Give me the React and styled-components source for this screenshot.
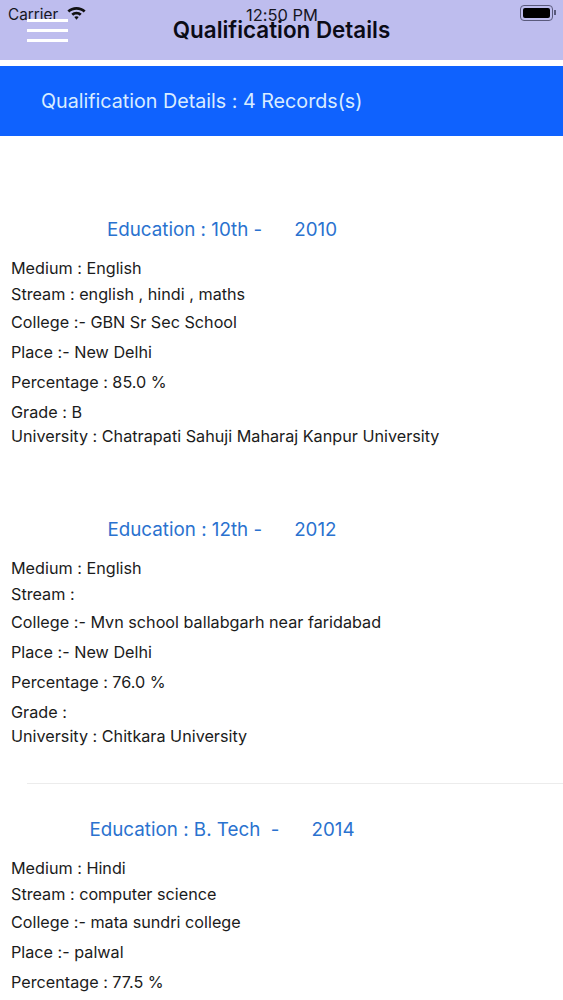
import React from "react";
import styled, { createGlobalStyle } from "styled-components";

const records = [
  {
    id: 1,
    education: "10th -",
    year: "2010",
    rows: [
      ["Medium : English", 0],
      ["Stream : english , hindi , maths", 6],
      ["College :- GBN Sr Sec School", 8],
      ["Place :- New Delhi", 10],
      ["Percentage : 85.0 %", 10],
      ["Grade : B", 10],
      ["University : Chatrapati Sahuji Maharaj Kanpur University", 4]
    ]
  },
  {
    id: 2,
    education: "12th -",
    year: "2012",
    line: true,
    rows: [
      ["Medium : English", 0],
      ["Stream :", 6],
      ["College :- Mvn school ballabgarh near faridabad", 8],
      ["Place :- New Delhi", 10],
      ["Percentage : 76.0 %", 10],
      ["Grade :", 10],
      ["University : Chitkara University", 4]
    ]
  },
  {
    id: 3,
    education: "B. Tech  -",
    year: "2014",
    rows: [
      ["Medium : Hindi", 0],
      ["Stream : computer science", 6],
      ["College :- mata sundri college", 8],
      ["Place :- palwal", 10],
      ["Percentage : 77.5 %", 10]
    ]
  }
];

const App = () => {
  return (
    <Page>
      <GlobalStyle />
      <Nav>
        <StatusBar>
          <Carrier>
            Carrier
            <svg width="19" height="14" viewBox="0 0 19 14">
              <path
                d="M9.5 1C6 1 2.800 2.300.4 4.600l1.900 2C4.200 4.800 6.700 3.800 9.500 3.800s5.300 1 7.200 2.800l1.900-2C16.200 2.300 13 1 9.500 1z"
                fill="#111"
              />
              <path
                d="M9.500 5.700c-2 0-3.800.8-5.200 2l1.900 2.100c.9-.8 2-1.300 3.300-1.300s2.400.5 3.300 1.300l1.900-2.100c-1.400-1.200-3.200-2-5.200-2z"
                fill="#111"
              />
              <path d="M9.500 10.200c-.9 0-1.600.3-2.200.8l2.200 2.800 2.200-2.800c-.6-.5-1.300-.8-2.200-.8z" fill="#111" />
            </svg>
          </Carrier>
          <Time>12:50 PM</Time>
          <Battery>
            <BatteryLevel />
          </Battery>
        </StatusBar>
        <Menu>
          <MenuBar />
          <MenuBar />
          <MenuBar />
        </Menu>
        <NavTitle>Qualification Details</NavTitle>
      </Nav>
      <Banner>Qualification Details : 4 Records(s)</Banner>
      <List>
        {records.map((item) => (
          <Record key={item.id}>
            <Heading>
              <span>Education : {item.education}</span>
              <span>{item.year}</span>
            </Heading>
            {item.rows.map(([text, top]) => (
              <Row key={text} $top={top}>
                {text}
              </Row>
            ))}
            <Divider $line={item.line} />
          </Record>
        ))}
      </List>
    </Page>
  );
};

export default App;

const GlobalStyle = createGlobalStyle`
  html, body {
    margin: 0;
    padding: 0;
    background: #fff;
  }
`;

const Page = styled.div`
  height: 1000px;
  overflow: hidden;
  background: #fff;
  font-family: Inter, "Liberation Sans", sans-serif;
  font-feature-settings: "calt" 0;
`;

const Nav = styled.div`
  position: relative;
  height: 60px;
  display: flex;
  align-items: center;
  justify-content: center;
  background: #bebdee;
`;

const StatusBar = styled.div`
  position: absolute;
  top: 5px;
  left: 8px;
  right: 7px;
  height: 19px;
  display: flex;
  align-items: center;
  justify-content: space-between;
  color: #16161f;
`;

const Carrier = styled.div`
  display: flex;
  align-items: center;
  gap: 9px;
  margin-top: -1px;
  font-size: 15.3px;

  svg {
    margin-top: -3px;
  }
`;

const Time = styled.div`
  position: absolute;
  left: 0;
  right: 0;
  text-align: center;
  font-size: 16.5px;
`;

const Battery = styled.div`
  position: relative;
  width: 33px;
  height: 16px;
  margin: -3px 3px 0 0;
  box-sizing: border-box;
  padding: 2px;
  border: 1.5px solid #5a5a7c;
  border-radius: 4px;

  &::after {
    content: "";
    position: absolute;
    top: 4px;
    right: -4px;
    width: 2px;
    height: 5px;
    background: #5a5a7c;
  }
`;

const BatteryLevel = styled.div`
  height: 100%;
  background: #000;
  border-radius: 2px;
`;

const Menu = styled.div`
  position: absolute;
  top: 19px;
  left: 27px;
  width: 41px;
  display: flex;
  flex-direction: column;
  gap: 7px;
`;

const MenuBar = styled.div`
  height: 3px;
  background: #fff;
`;

const NavTitle = styled.div`
  margin-top: -2px;
  font-size: 22.4px;
  font-weight: 600;
  color: #0b0b16;
`;

const Banner = styled.div`
  height: 70px;
  margin-top: 6px;
  padding-left: 41px;
  display: flex;
  align-items: center;
  background: #0f62fe;
  color: #d9ecff;
  font-size: 19.7px;
`;

const List = styled.div`
  padding-top: 83px;
`;

const Record = styled.div`
  padding-left: 11px;
`;

const Heading = styled.div`
  width: 422px;
  margin-bottom: 17px;
  display: flex;
  justify-content: center;
  gap: 32px;
  color: #2a72cf;
  font-size: 18.8px;
  line-height: 22px;
  white-space: pre;
`;

const Row = styled.div`
  margin-top: ${(props) => props.$top}px;
  color: #1b1b1b;
  font-size: 16.2px;
  line-height: 20px;
`;

const Divider = styled.div`
  height: 1px;
  margin: 37px 0 35px 16px;
  background: ${(props) => (props.$line ? "#ececec" : "transparent")};
`;
